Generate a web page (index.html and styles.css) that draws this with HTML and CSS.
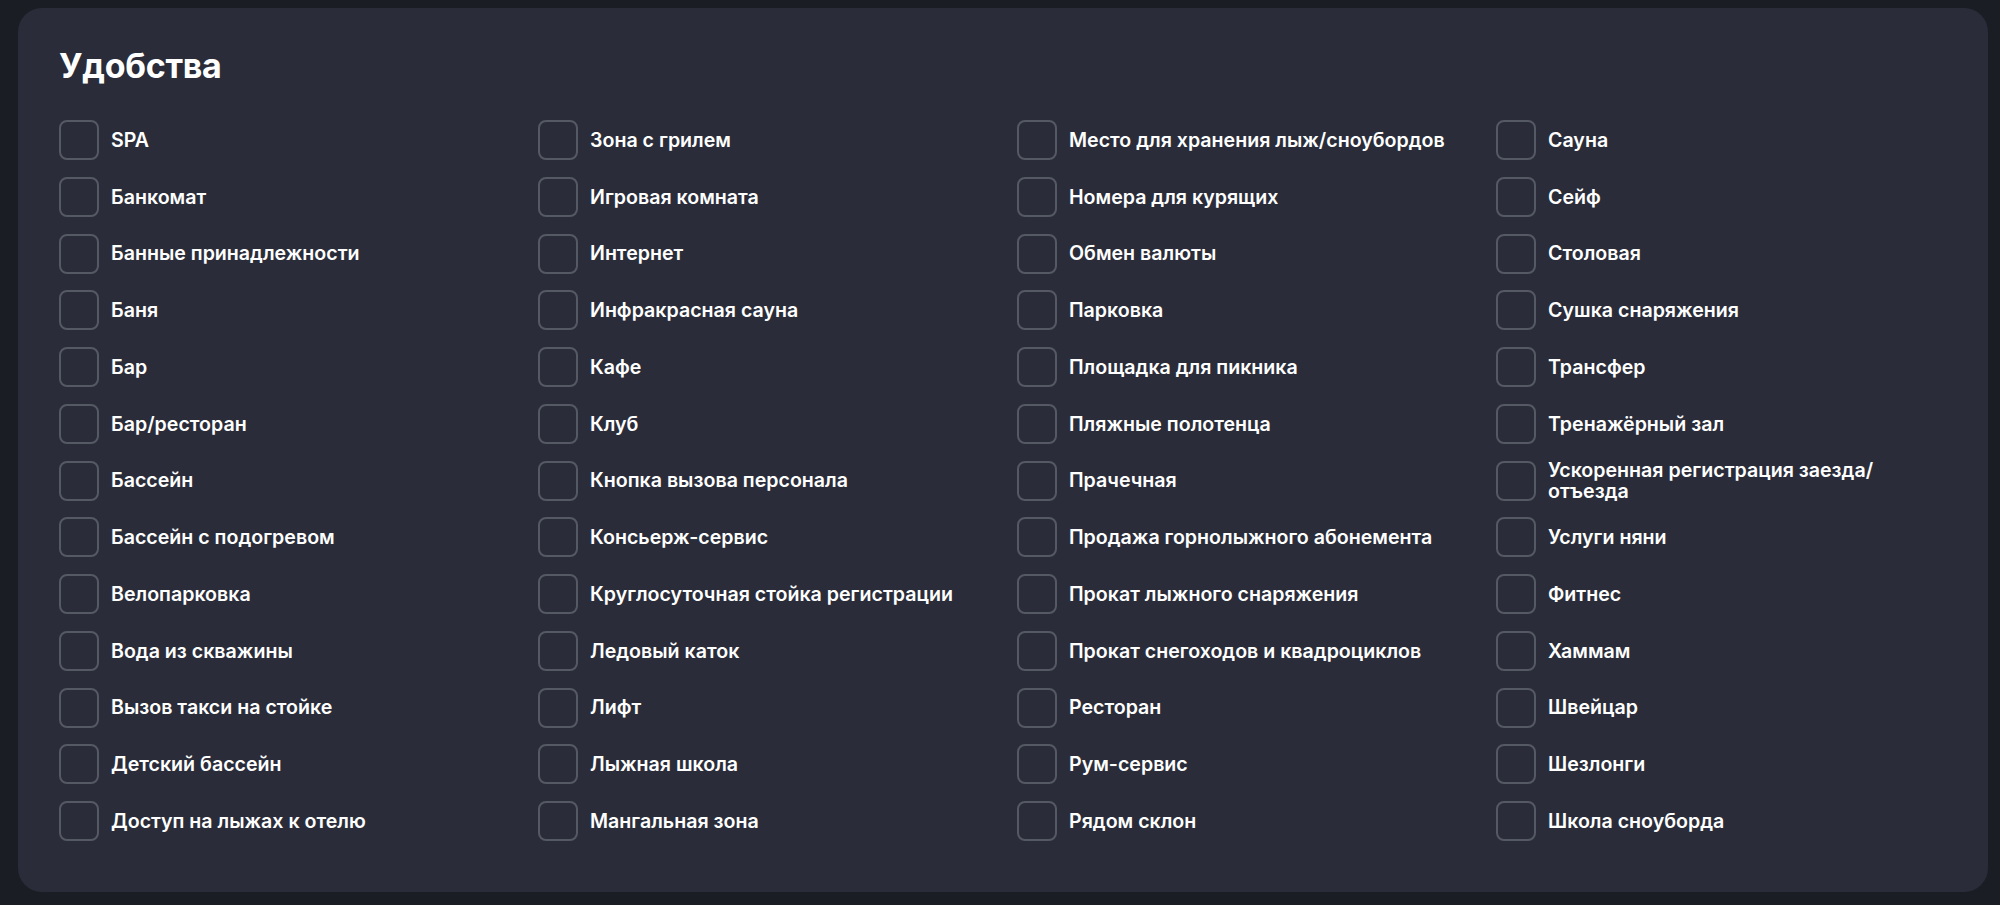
FILE: index.html
```html
<!DOCTYPE html>
<html lang="ru">
<head>
<meta charset="utf-8">
<title>Удобства</title>
<link rel="stylesheet" href="styles.css">
</head>
<body>
<section class="card">
  <h2 class="title">Удобства</h2>
  <div class="grid">
    <label class="item"><span class="box"></span><span class="text">SPA</span></label>
    <label class="item"><span class="box"></span><span class="text">Банкомат</span></label>
    <label class="item"><span class="box"></span><span class="text">Банные принадлежности</span></label>
    <label class="item"><span class="box"></span><span class="text">Баня</span></label>
    <label class="item"><span class="box"></span><span class="text">Бар</span></label>
    <label class="item"><span class="box"></span><span class="text">Бар/ресторан</span></label>
    <label class="item"><span class="box"></span><span class="text">Бассейн</span></label>
    <label class="item"><span class="box"></span><span class="text">Бассейн с подогревом</span></label>
    <label class="item"><span class="box"></span><span class="text">Велопарковка</span></label>
    <label class="item"><span class="box"></span><span class="text">Вода из скважины</span></label>
    <label class="item"><span class="box"></span><span class="text">Вызов такси на стойке</span></label>
    <label class="item"><span class="box"></span><span class="text">Детский бассейн</span></label>
    <label class="item"><span class="box"></span><span class="text">Доступ на лыжах к отелю</span></label>

    <label class="item"><span class="box"></span><span class="text">Зона с грилем</span></label>
    <label class="item"><span class="box"></span><span class="text">Игровая комната</span></label>
    <label class="item"><span class="box"></span><span class="text">Интернет</span></label>
    <label class="item"><span class="box"></span><span class="text">Инфракрасная сауна</span></label>
    <label class="item"><span class="box"></span><span class="text">Кафе</span></label>
    <label class="item"><span class="box"></span><span class="text">Клуб</span></label>
    <label class="item"><span class="box"></span><span class="text">Кнопка вызова персонала</span></label>
    <label class="item"><span class="box"></span><span class="text">Консьерж-сервис</span></label>
    <label class="item"><span class="box"></span><span class="text">Круглосуточная стойка регистрации</span></label>
    <label class="item"><span class="box"></span><span class="text">Ледовый каток</span></label>
    <label class="item"><span class="box"></span><span class="text">Лифт</span></label>
    <label class="item"><span class="box"></span><span class="text">Лыжная школа</span></label>
    <label class="item"><span class="box"></span><span class="text">Мангальная зона</span></label>

    <label class="item"><span class="box"></span><span class="text">Место для хранения лыж/сноубордов</span></label>
    <label class="item"><span class="box"></span><span class="text">Номера для курящих</span></label>
    <label class="item"><span class="box"></span><span class="text">Обмен валюты</span></label>
    <label class="item"><span class="box"></span><span class="text">Парковка</span></label>
    <label class="item"><span class="box"></span><span class="text">Площадка для пикника</span></label>
    <label class="item"><span class="box"></span><span class="text">Пляжные полотенца</span></label>
    <label class="item"><span class="box"></span><span class="text">Прачечная</span></label>
    <label class="item"><span class="box"></span><span class="text">Продажа горнолыжного абонемента</span></label>
    <label class="item"><span class="box"></span><span class="text">Прокат лыжного снаряжения</span></label>
    <label class="item"><span class="box"></span><span class="text">Прокат снегоходов и квадроциклов</span></label>
    <label class="item"><span class="box"></span><span class="text">Ресторан</span></label>
    <label class="item"><span class="box"></span><span class="text">Рум-сервис</span></label>
    <label class="item"><span class="box"></span><span class="text">Рядом склон</span></label>

    <label class="item"><span class="box"></span><span class="text">Сауна</span></label>
    <label class="item"><span class="box"></span><span class="text">Сейф</span></label>
    <label class="item"><span class="box"></span><span class="text">Столовая</span></label>
    <label class="item"><span class="box"></span><span class="text">Сушка снаряжения</span></label>
    <label class="item"><span class="box"></span><span class="text">Трансфер</span></label>
    <label class="item"><span class="box"></span><span class="text">Тренажёрный зал</span></label>
    <label class="item"><span class="box"></span><span class="text narrow">Ускоренная регистрация заезда/<wbr>отъезда</span></label>
    <label class="item"><span class="box"></span><span class="text">Услуги няни</span></label>
    <label class="item"><span class="box"></span><span class="text">Фитнес</span></label>
    <label class="item"><span class="box"></span><span class="text">Хаммам</span></label>
    <label class="item"><span class="box"></span><span class="text">Швейцар</span></label>
    <label class="item"><span class="box"></span><span class="text">Шезлонги</span></label>
    <label class="item"><span class="box"></span><span class="text">Школа сноуборда</span></label>
  </div>
</section>
</body>
</html>
```

FILE: styles.css
```css
* { box-sizing: border-box; }

html, body {
  margin: 0;
  padding: 0;
  background: #1b1d24;
}

body {
  font-family: Inter, "Noto Sans", "Liberation Sans", sans-serif;
  color: #ffffff;
  padding: 8px 12px 13px 18px;
}

.card {
  background: #2a2d39;
  border-radius: 24px;
  padding: 38px 41px 50px 41px;
  height: 884px;
}

.title {
  margin: 0 0 34px 0;
  font-size: 34px;
  line-height: 40px;
  font-weight: 700;
  letter-spacing: -0.3px;
}

.grid {
  display: grid;
  grid-template-columns: repeat(4, 1fr);
  grid-template-rows: repeat(13, 40px);
  grid-auto-flow: column;
  column-gap: 28px;
  row-gap: 16.75px;
}

.item {
  display: flex;
  align-items: center;
  gap: 12px;
  min-width: 0;
}

.box {
  flex: 0 0 40px;
  width: 40px;
  height: 40px;
  border: 2px solid #555964;
  border-radius: 8px;
}

.text {
  font-size: 19.6px;
  line-height: 20.4px;
  font-weight: 600;
  color: #ffffff;
}

.narrow {
  max-width: 360px;
}
```
